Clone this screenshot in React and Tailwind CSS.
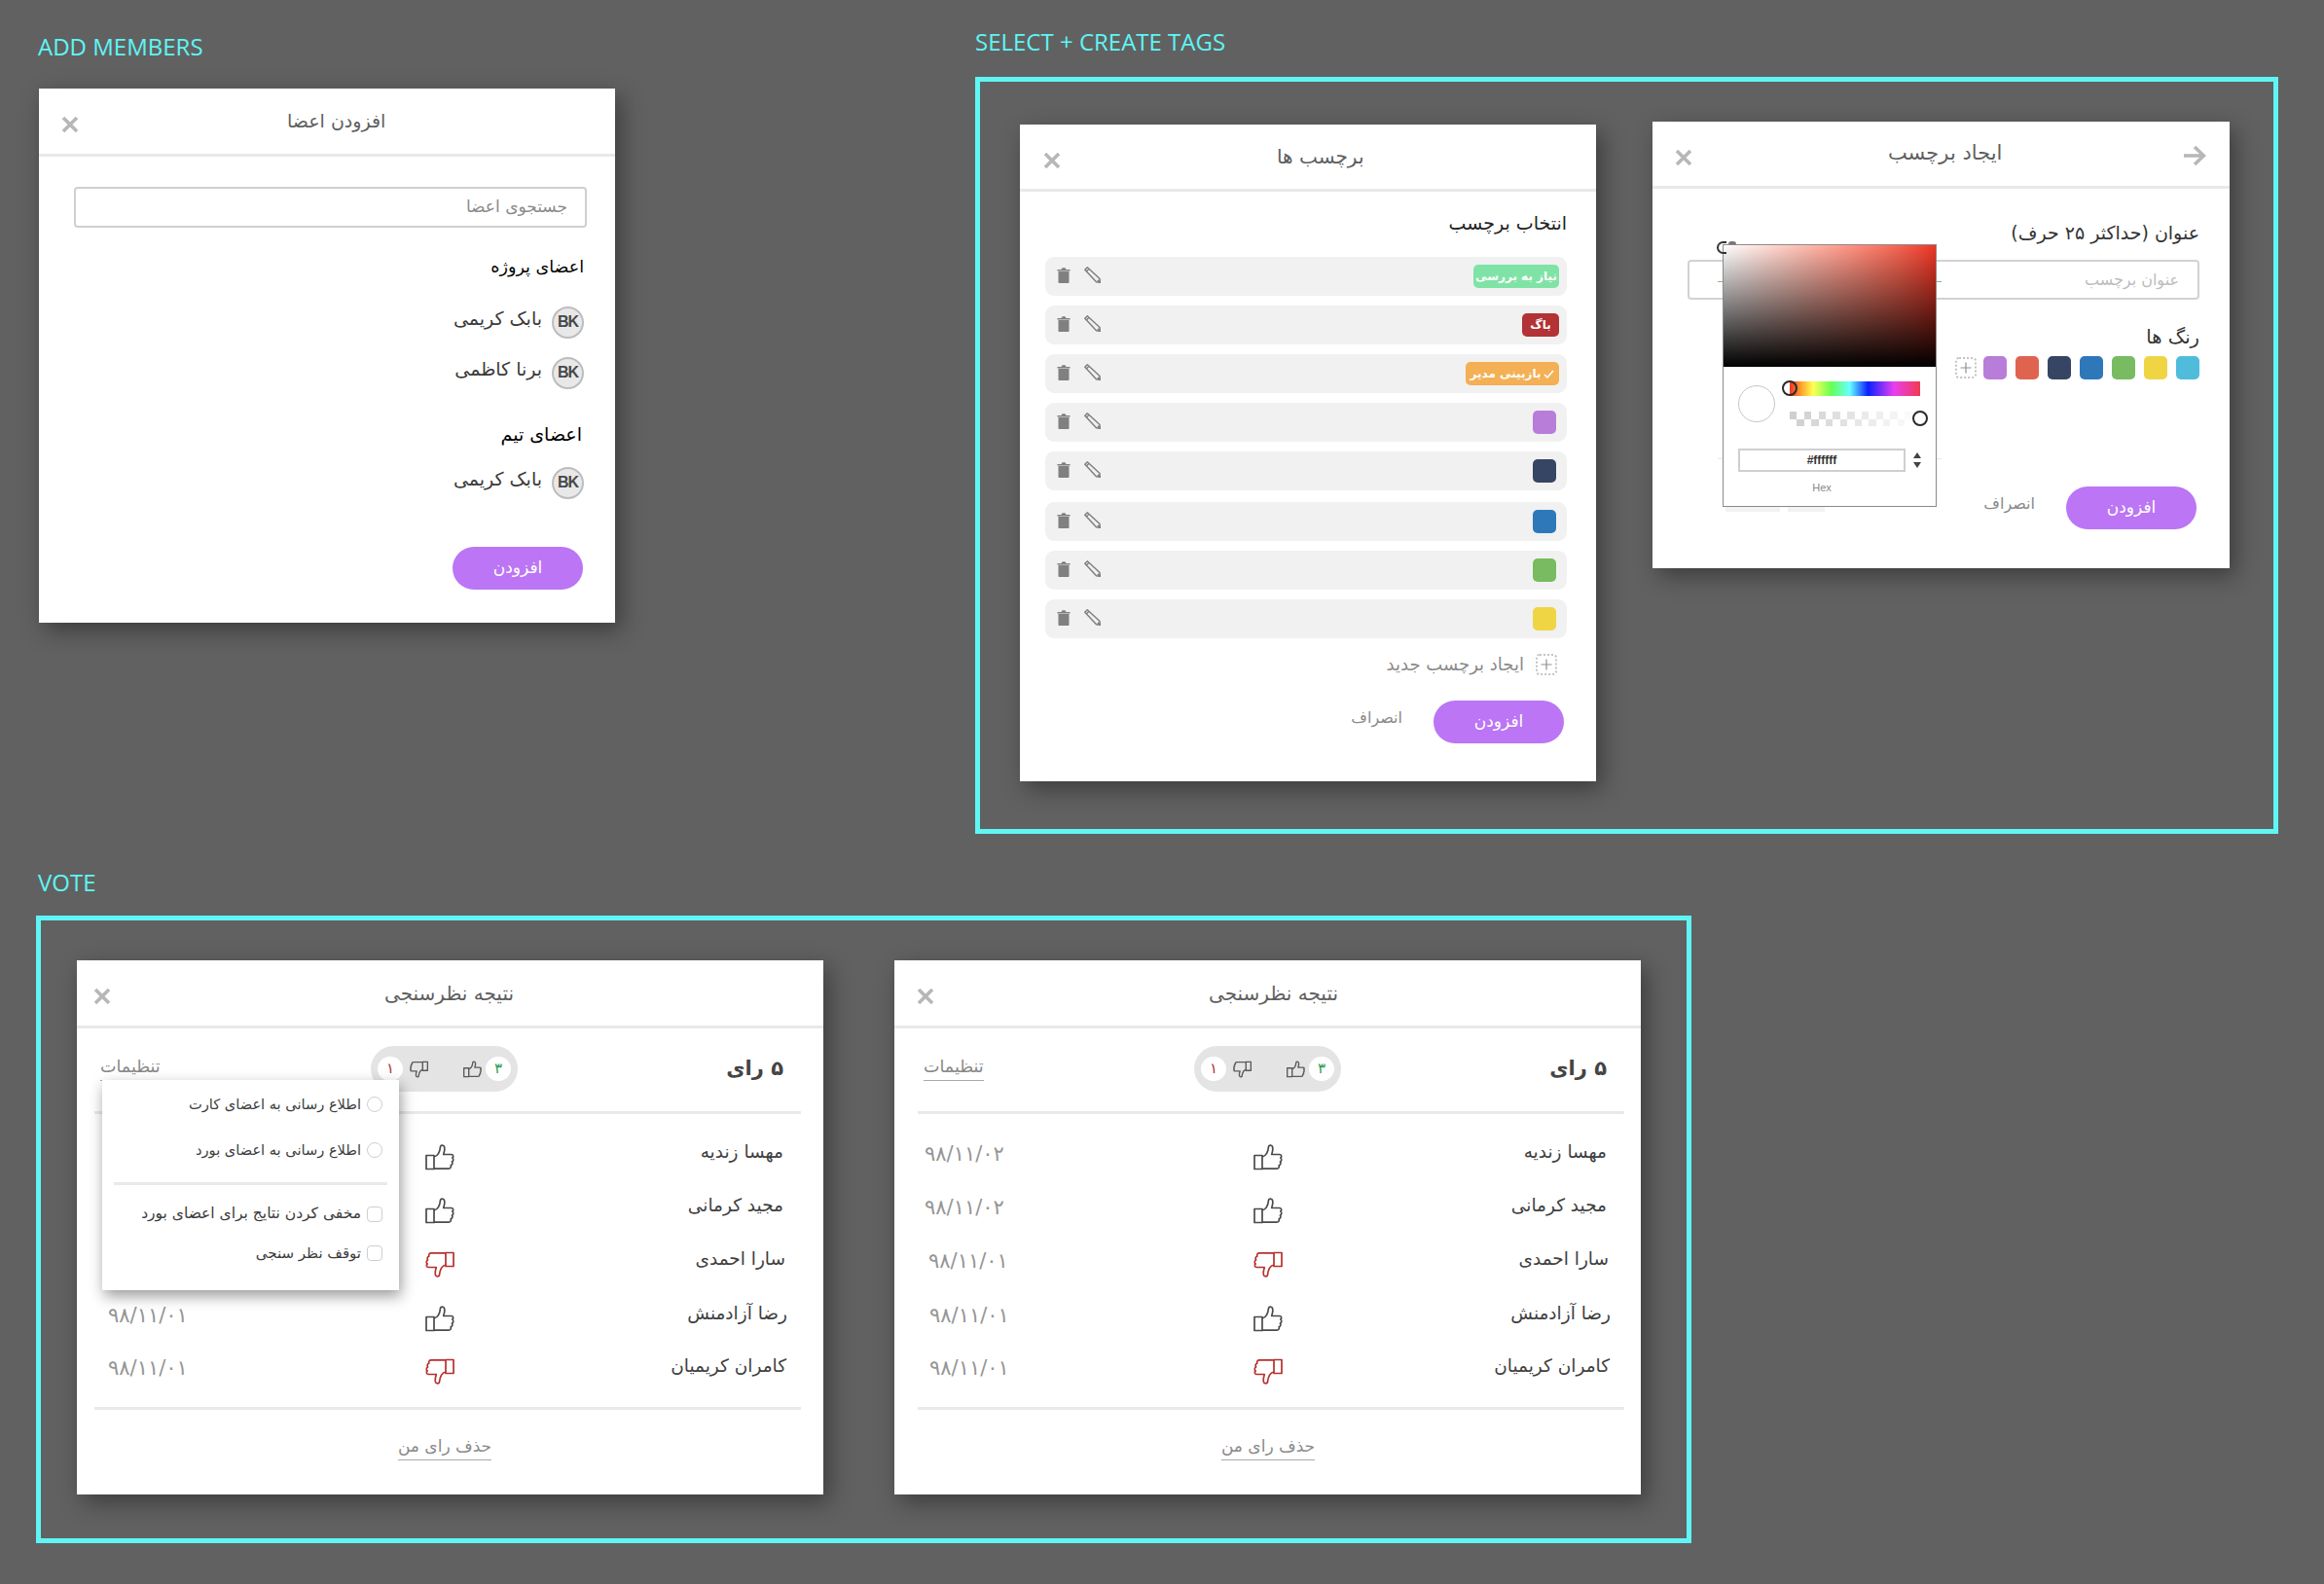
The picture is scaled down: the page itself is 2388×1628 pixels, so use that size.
import React from "react";

const Close = () => (
  <svg width="18" height="18" viewBox="0 0 18 18" className="shrink-0">
    <path d="M2 2L16 16M16 2L2 16" stroke="#b7b7b7" strokeWidth="3.6" fill="none" />
  </svg>
);
const BackArrow = () => (
  <svg width="24" height="24" viewBox="0 0 24 24" className="shrink-0">
    <path d="M1 12H21M12 3L21.5 12L12 21" stroke="#b7b7b7" strokeWidth="3.6" fill="none" />
  </svg>
);
const Thumb = ({ color = "#4a4a4a", down = false, w = 30, h = 27, sw = 1.7 }) => (
  <svg width={w} height={h} viewBox="0 0 30 27" className={down ? "rotate-180 shrink-0" : "shrink-0"}>
    <g fill="none" stroke={color} strokeWidth={sw} strokeLinejoin="round">
      <rect x="1" y="11.5" width="8" height="14" />
      <path d="M9 13C13 12 15 8 15.5 2.5C16 0.5 19 0.5 19.7 3C20.3 6 19.4 8 18.7 10.5L26.5 10.5C29 10.5 29.3 13 27.8 14C29.3 15 29 17.500 27.4 18C28.4 19.500 27.800 21.500 26.200 21.800C26.800 23.500 25.800 25.200 24 25.200L9 25.200" />
    </g>
  </svg>
);
const Trash = () => (
  <svg width="14" height="18" viewBox="0 0 14 17" className="shrink-0">
    <path d="M0.5 2.5H13.500V4H0.500Z M4.500 2.500L5.500 0.700H8.500L9.500 2.500Z M1.500 4.500H12.500V15.500C12.500 16.300 12 16.600 11.400 16.600H2.600C2 16.600 1.500 16.300 1.500 15.500Z" fill="#808080" />
  </svg>
);
const Pencil = () => (
  <svg width="17" height="17" viewBox="0 0 17 17" className="shrink-0">
    <path d="M3.300 0.800L16 12.500L16.300 16.300L12.500 15.800L0.800 3.300Z M2.300 5L5 2.300" fill="none" stroke="#808080" strokeWidth="1.500" strokeLinejoin="round" />
    <path d="M14 14L16.300 16.300" stroke="#808080" strokeWidth="2" />
  </svg>
);
const Plus = () => (
  <div className="w-[22px] h-[22px] rounded-[4px] border-2 border-dotted border-[#c4c4c4] flex items-center justify-center shrink-0">
    <svg width="12" height="12" viewBox="0 0 12 12">
      <path d="M6 0.500V11.500M0.500 6H11.500" stroke="#8f8f8f" strokeWidth="1.200" />
    </svg>
  </div>
);

const Swatch = ({ c }) => <div className="w-[24px] h-[24px] rounded-[5px] shrink-0" style={{ background: c }} />;

const Header = ({ title, xClass, titleClass, h, children }) => (
  <div className={`flex items-center border-b-[3px] border-[#e9e9e9] ${h}`}>
    <div className={`mt-[7px] ${xClass}`}><Close /></div>
    <div dir="rtl" className={`text-[#5f5f5f] whitespace-nowrap ${titleClass}`}>{title}</div>
    {children}
  </div>
);

const Btn = ({ className = "" }) => (
  <div dir="rtl" className={`rounded-full bg-[#bb75f5] text-white text-[17px] flex items-center justify-center ${className}`}>افزودن</div>
);

const Avatar = () => (
  <div className="w-[33px] h-[33px] rounded-full border-2 border-[#bdbdbd] bg-[#e8e8e8] text-[#484848] text-[16px] tracking-[-1px] font-bold flex items-center justify-center font-['Liberation_Sans',sans-serif] shrink-0">BK</div>
);

const Member = ({ name, className }) => (
  <div className={`flex items-center justify-end gap-[10px] ${className}`}>
    <div dir="rtl" className="text-[#3a3a3a] text-[19px] pb-[8px] leading-[26px]">{name}</div>
    <Avatar />
  </div>
);

const Label = ({ children, className }) => (
  <div className={`h-[32px] leading-[32px] text-[#5ff5f5] text-[24px] font-normal font-['Open_Sans',sans-serif] whitespace-nowrap ${className}`}>{children}</div>
);

const MembersCard = () => (
  <div className="w-[592px] h-[549px] bg-white shadow-[6px_8px_22px_rgba(0,0,0,0.38)] flex flex-col">
    <Header title="افزودن اعضا" h="h-[70px]" xClass="ml-[23px]" titleClass="ml-[214px] text-[19px]" />
    <div className="flex flex-col items-end pr-[32px]">
      <div dir="rtl" className="w-[527px] h-[42px] mt-[31px] -mr-[3px] rounded-[4px] border-2 border-[#cfcfcf] flex items-center pr-[18px] text-[#8a8a8a] text-[17px]">جستجوی اعضا</div>
      <div dir="rtl" className="h-[28px] leading-[28px] mt-[26px] text-black text-[17.500px]">اعضای پروژه</div>
      <Member name="بابک کریمی" className="mt-[26px]" />
      <Member name="برنا کاظمی" className="mt-[18px]" />
      <div dir="rtl" className="h-[28px] leading-[28px] mt-[32px] mr-[2px] text-black text-[19px]">اعضای تیم</div>
      <Member name="بابک کریمی" className="mt-[19px]" />
      <Btn className="w-[134px] h-[44px] mt-[49px] mr-[1px]" />
    </div>
  </div>
);

const chips = [
  { t: "نیاز به بررسی", c: "#7fe3a5", w: "w-[88px]" },
  { t: "باگ", c: "#b23235", w: "w-[38px]" },
  { t: "بازبینی مدیر", c: "#f3b055", w: "w-[96px]", check: true },
];

const TagRow = ({ className, children }) => (
  <div className={`w-[536px] h-[40px] rounded-[9px] bg-[#f1f1f1] flex items-center pl-[12px] shrink-0 ${className}`}>
    <div className="-mt-[2px]"><Trash /></div>
    <div className="ml-[14px] -mt-[3px]"><Pencil /></div>
    <div className="ml-auto flex">{children}</div>
  </div>
);

const Chip = ({ t, c, w, check }) => (
  <div dir="rtl" className={`h-[24px] ${w} mr-[8px] rounded-[5px] flex items-center justify-center gap-[3px] text-white text-[12px] font-bold whitespace-nowrap`} style={{ background: c }}>
    {check && (
      <svg width="11" height="9" viewBox="0 0 11 9"><path d="M1 5L4 8L10 1" stroke="#fff" strokeWidth="1.600" fill="none" /></svg>
    )}
    {t}
  </div>
);

const TagsCard = () => {
  const colors = ["#b87dd8", "#364563", "#2e78ba", "#78bb60", "#efd544"];
  return (
    <div className="w-[592px] h-[675px] mt-[4px] bg-white shadow-[6px_8px_22px_rgba(0,0,0,0.38)] flex flex-col shrink-0">
      <Header title="برچسب ها" h="h-[69px]" xClass="ml-[24px]" titleClass="ml-[222px] text-[20px]" />
      <div className="flex flex-col items-end pr-[30px]">
        <div dir="rtl" className="h-[28px] leading-[28px] mt-[18px] text-[#222] text-[19px]">انتخاب برچسب</div>
        <div className="flex flex-col mt-[21px]">
          {chips.map((c, i) => (
            <TagRow key={i} className={i ? "mt-[10px]" : ""}><Chip {...c} /></TagRow>
          ))}
          {colors.map((c, i) => (
            <TagRow key={c} className={i === 2 ? "mt-[12px]" : "mt-[10px]"}>
              <div className="mr-[11px]"><Swatch c={c} /></div>
            </TagRow>
          ))}
        </div>
        <div className="flex items-center mt-[15px] mr-[10px] gap-[12px] h-[24px]">
          <div dir="rtl" className="text-[#8a8a8a] text-[18px] leading-[24px]">ایجاد برچسب جدید</div>
          <Plus />
        </div>
        <div className="flex items-start mt-[25px] mr-[3px] gap-[32px]">
          <div dir="rtl" className="text-[#8a8a8a] text-[16px] leading-[36px]">انصراف</div>
          <Btn className="w-[134px] h-[44px]" />
        </div>
      </div>
    </div>
  );
};

const alphaCells = Array.from({ length: 18 });

const Picker = () => (
  <>
    <div className="absolute left-[67px] top-[164px] w-[230px] h-px bg-[#9bb07a]" />
    <div className="absolute left-[67px] top-[346px] w-[230px] h-px bg-[#e8e8e8]" />
    <div className="absolute left-[75px] top-[395px] w-[56px] h-[6px] bg-[#f2f2f2]" />
    <div className="absolute left-[139px] top-[395px] w-[38px] h-[6px] bg-[#f2f2f2]" />
    <div className="absolute left-[72px] top-[126px] w-[220px] h-[270px] bg-white border-[1.5px] border-[#8a8a8a] flex flex-col">
      <div className="h-[125px] w-full bg-linear-to-r from-white to-[#ee3424] shrink-0">
        <div className="h-full w-full bg-linear-to-t from-black to-transparent" />
      </div>
      <div className="flex mt-[15px] ml-[15px]">
        <div className="w-[38px] h-[38px] mt-[4px] rounded-full border-[1.5px] border-[#c6c6c6] bg-white shrink-0" />
        <div className="ml-[15px] relative">
          <div className="w-[134px] h-[15px] bg-[linear-gradient(to_right,#ee3424,#ffb030_10%,#ffff55_18%,#66ff55_32%,#66ffff_46%,#0a20ff_60%,#e840f0_80%,#f03a50)]" />
          <div className="absolute -left-[8px] -top-[1px] w-[16px] h-[16px] rounded-full border-2 border-[#2a2a2a] bg-[linear-gradient(to_right,#fff_50%,transparent_50%)]" />
          <div className="mt-[16px] w-[134px] h-[15px] grid grid-cols-[repeat(18,7.400px)] grid-rows-[7.500px_7.500px]">
            {alphaCells.map((_, i) => (
              <div key={i} className={i % 2 ? "row-start-2 bg-[#cfcfcf]" : "row-start-1 bg-[#cfcfcf]"} style={{ gridColumnStart: i + 1, opacity: 1 - i / 18 }} />
            ))}
          </div>
          <div className="absolute left-[126px] top-[30px] w-[16px] h-[16px] rounded-full border-2 border-[#2a2a2a] bg-white" />
        </div>
      </div>
      <div className="flex items-center mt-[23px] ml-[15px]">
        <div className="w-[172px] h-[24px] border-2 border-[#cfcfcf] flex items-center justify-center text-[12px] font-bold text-[#333] font-['Liberation_Sans',sans-serif]">#ffffff</div>
        <svg width="8" height="16" viewBox="0 0 8 16" className="ml-[8px]">
          <path d="M4 0L8 6H0Z M4 16L8 10H0Z" fill="#444" />
        </svg>
      </div>
      <div className="w-[172px] ml-[15px] mt-[8px] text-center text-[11px] text-[#888] font-['Liberation_Sans',sans-serif]">Hex</div>
    </div>
    <div className="absolute left-[66px] top-[123px] w-[10px] h-[13px] rounded-l-full border-2 border-r-0 border-[#333]" />
    <div className="absolute left-[78px] top-[123px] w-[8px] h-[3px] rounded-t-full bg-[#777]" />
  </>
);

const CreateCard = () => {
  const colors = ["#b87dd8", "#df6450", "#364563", "#2e78ba", "#78bb60", "#efd544", "#50bcdb"];
  return (
    <div className="relative w-[593px] h-[459px] mt-[1px] ml-[58px] bg-white shadow-[6px_8px_22px_rgba(0,0,0,0.38)] flex flex-col shrink-0">
      <Header title="ایجاد برچسب" h="h-[69px]" xClass="ml-[23px]" titleClass="ml-[201px] text-[21px]">
        <div className="ml-auto mr-[24px] mt-[4px]"><BackArrow /></div>
      </Header>
      <div className="flex flex-col items-end pr-[31px]">
        <div dir="rtl" className="h-[28px] leading-[28px] mt-[31px] text-[#333] text-[19px]">عنوان (حداکثر ۲۵ حرف)</div>
        <div dir="rtl" className="w-[526px] h-[41px] mt-[14px] rounded-[4px] border-2 border-[#d2d2d2] flex items-center pr-[19px] text-[#bcbcbc] text-[16px]">عنوان برچسب</div>
        <div dir="rtl" className="h-[28px] leading-[28px] mt-[25px] text-[#333] text-[19.500px]">رنگ ها</div>
        <div className="flex items-center gap-[9px] mt-[5px]">
          <div className="mr-[-2px]"><Plus /></div>
          {colors.map((c) => (<Swatch key={c} c={c} />))}
        </div>
        <div className="flex items-start mt-[110px] mr-[3px] gap-[32px]">
          <div dir="rtl" className="text-[#8a8a8a] text-[16px] leading-[36px]">انصراف</div>
          <Btn className="w-[134px] h-[44px]" />
        </div>
      </div>
      <Picker />
    </div>
  );
};

const votes = [
  { n: "مهسا زندیه", d: "۹۸/۱۱/۰۲", up: true, mr: "pr-[18px]", top: "mt-[19px]" },
  { n: "مجید کرمانی", d: "۹۸/۱۱/۰۲", up: true, mr: "pr-[18px]", top: "mt-[15px]" },
  { n: "سارا احمدی", d: "۹۸/۱۱/۰۱", up: false, mr: "pr-[16px]", top: "mt-[15px]" },
  { n: "رضا آزادمنش", d: "۹۸/۱۱/۰۱", up: true, mr: "pr-[14px]", top: "mt-[16px]" },
  { n: "کامران کریمیان", d: "۹۸/۱۱/۰۱", up: false, mr: "pr-[15px]", top: "mt-[14px]" },
];
const bDate = ["pl-[7px]", "pl-[7px]", "pl-[11px]", "pl-[12px]", "pl-[12px]"];

const Count = ({ c, t }) => (
  <div className="w-[26px] h-[25px] rounded-full bg-white flex items-center justify-center text-[15px] font-['DejaVu_Sans',sans-serif]" style={{ color: c }}>{t}</div>
);

const MenuRow = ({ t, r, m, size }) => (
  <div dir="rtl" className={`flex items-center h-[30px] pr-[17px] gap-[6px] ${m}`}>
    <div className={`w-[16px] h-[16px] border-[1.5px] border-[#cfcfcf] bg-white shrink-0 ${r}`} />
    <div className={`text-[#3c3c3c] whitespace-nowrap ${size}`}>{t}</div>
  </div>
);

const VoteCard = ({ offset, cols, menu, dateCls, className }) => (
  <div className={`relative w-[767px] h-[549px] bg-white shadow-[6px_8px_22px_rgba(0,0,0,0.38)] flex flex-col shrink-0 ${className}`}>
    <Header
      title="نتیجه نظرسنجی"
      h="h-[70px]"
      xClass={menu ? "ml-[17px]" : "ml-[23px]"}
      titleClass={menu ? "ml-[281px] text-[20px]" : "ml-[282px] text-[20px]"}
    />
    <div className={`flex flex-col w-[726px] ${offset}`}>
      <div className="grid grid-cols-[284px_151px_1fr] items-start mt-[18px] h-[47px]">
        <div className="flex">
          <div dir="rtl" className="ml-[6px] mt-[9px] h-[27px] text-[#888] text-[17.500px] border-b-[1.5px] border-[#aaa] leading-[24px]">تنظیمات</div>
        </div>
        <div className="h-[47px] rounded-full bg-[#e4e4e4] flex items-center pl-[7px] pr-[7px]">
          <Count c="#b23235" t="۱" />
          <div className="ml-[7px]"><Thumb down color="#5a5a5a" w={19} h={18} sw={2.2} /></div>
          <div className="ml-auto mr-[4px]"><Thumb color="#5a5a5a" w={19} h={18} sw={2.2} /></div>
          <Count c="#2b9a4a" t="۳" />
        </div>
        <div dir="rtl" className="pr-[18px] mt-[8px] text-[#444] text-[21px] font-bold leading-[30px]">۵ رای</div>
      </div>
      <div className="h-[3px] bg-[#e9e9e9] mt-[20px]" />
      {votes.map((v, i) => (
        <div key={i} className={`grid ${cols} items-center h-[40px] ${v.top}`}>
          <div className={`text-[#959595] text-[21px] leading-[28px] mt-[3px] ${dateCls ? dateCls[i] : "pl-[14px]"}`}>{menu && i < 3 ? "" : v.d}</div>
          <div className="mt-[10px]"><Thumb color={v.up ? "#4a4a4a" : "#b5302f"} down={!v.up} /></div>
          <div dir="rtl" className={`text-[#3f3f3f] text-[18.500px] ${v.mr}`}>{v.n}</div>
        </div>
      ))}
      <div className="h-[3px] bg-[#e9e9e9] mt-[22px]" />
      <div className="flex justify-center mt-[25px] w-[720px]">
        <div dir="rtl" className="text-[#8a8a8a] text-[17px] h-[27px] leading-[25px] border-b-[1.5px] border-[#aaa]">حذف رای من</div>
      </div>
    </div>
    {menu && (
      <div className="absolute left-[26px] top-[123px] w-[305px] h-[216px] bg-white shadow-[2px_6px_14px_rgba(0,0,0,0.4)] flex flex-col">
        <MenuRow t="اطلاع رسانی به اعضای کارت" r="rounded-full" m="mt-[10px]" size="text-[14.600px]" />
        <MenuRow t="اطلاع رسانی به اعضای بورد" r="rounded-full" m="mt-[17px]" size="text-[14.600px]" />
        <div className="h-[3px] bg-[#e9e9e9] mx-[12px] mt-[18px]" />
        <MenuRow t="مخفی کردن نتایج برای اعضای بورد" r="rounded-[4px]" m="mt-[15px]" size="text-[15.500px]" />
        <MenuRow t="توقف نظر سنجی" r="rounded-[4px]" m="mt-[10px]" size="text-[15px]" />
      </div>
    )}
  </div>
);

export default function App() {
  return (
    <div className="w-[2388px] h-[1628px] bg-[#616161] overflow-hidden font-['DejaVu_Sans',sans-serif] flex flex-col">
      <div className="flex h-[857px] shrink-0">
        <div className="ml-[40px] w-[592px] shrink-0">
          <Label className="mt-[32px] -ml-[1px]">ADD MEMBERS</Label>
          <div className="mt-[27px]"><MembersCard /></div>
        </div>
        <div className="ml-[370px] shrink-0">
          <Label className="mt-[27px]">SELECT + CREATE TAGS</Label>
          <div className="w-[1339px] h-[778px] mt-[20px] border-[5px] border-[#5ff5f5] pl-[41px] pt-[40px] flex items-start">
            <TagsCard />
            <CreateCard />
          </div>
        </div>
      </div>
      <Label className="mt-[34px] ml-[39px]">VOTE</Label>
      <div className="w-[1701px] h-[645px] mt-[18px] ml-[37px] border-[5px] border-[#5ff5f5] pl-[37px] pt-[41px] flex items-start shrink-0">
        <VoteCard offset="ml-[18px]" cols="grid-cols-[340px_30px_1fr]" menu />
        <VoteCard offset="ml-[24px]" cols="grid-cols-[345px_30px_1fr]" dateCls={bDate} className="ml-[73px]" />
      </div>
    </div>
  );
}
